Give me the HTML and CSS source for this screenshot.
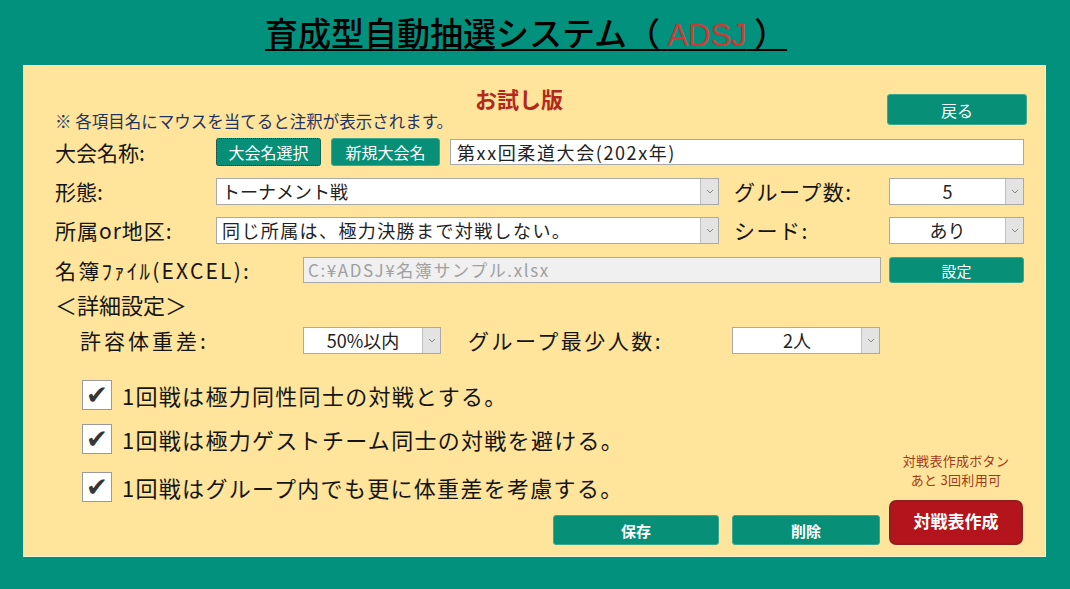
FILE: index.html
```html
<!DOCTYPE html>
<html lang="ja">

<head>
    <meta charset="UTF-8">
    <title>育成型自動抽選システム（ADSJ）</title>
    <link rel="stylesheet" href="styles.css">
</head>

<body>
    <h1 class="title">育成型自動抽選システム（ <span class="title-red">ADSJ</span> ）</h1>

    <div class="panel">
        <div class="head">
            <div class="head-left">
                <div class="trial">お試し版</div>
                <div class="note">※ 各項目名にマウスを当てると注釈が表示されます。</div>
            </div>
            <button class="btn btn-back">戻る</button>
        </div>

        <div class="row">
            <div class="label w161">大会名称:</div>
            <button class="btn btn-sm btn-focus">大会名選択</button>
            <button class="btn btn-sm btn-new">新規大会名</button>
            <div class="input input-name">第xx回柔道大会(202x年)</div>
        </div>

        <div class="row gap11">
            <div class="label w161">形態:</div>
            <div class="select w503"><span class="sel-text">トーナメント戦</span><span class="arrow"><svg width="8" height="5" viewBox="0 0 8 5"><polyline points="1,1 4,4 7,1" fill="none" stroke="#888" stroke-width="1"/></svg></span></div>
            <div class="label label2">グループ数:</div>
            <div class="select w135 center"><span class="sel-text">5</span><span class="arrow"><svg width="8" height="5" viewBox="0 0 8 5"><polyline points="1,1 4,4 7,1" fill="none" stroke="#888" stroke-width="1"/></svg></span></div>
        </div>

        <div class="row gap11">
            <div class="label w161 spaced">所属or地区:</div>
            <div class="select w503"><span class="sel-text wide">同じ所属は、極力決勝まで対戦しない。</span><span class="arrow"><svg width="8" height="5" viewBox="0 0 8 5"><polyline points="1,1 4,4 7,1" fill="none" stroke="#888" stroke-width="1"/></svg></span></div>
            <div class="label label2">シード:</div>
            <div class="select w135 center"><span class="sel-text">あり</span><span class="arrow"><svg width="8" height="5" viewBox="0 0 8 5"><polyline points="1,1 4,4 7,1" fill="none" stroke="#888" stroke-width="1"/></svg></span></div>
        </div>

        <div class="row gap12">
            <div class="label label-file w248">名簿ﾌｧｲﾙ(EXCEL):</div>
            <div class="input input-file">C:¥ADSJ¥名簿サンプル.xlsx</div>
            <button class="btn btn-set">設定</button>
        </div>

        <div class="section">＜詳細設定＞</div>

        <div class="row gap10">
            <div class="label label-indent w248">許容体重差:</div>
            <div class="select w138 center"><span class="sel-text">50%以内</span><span class="arrow"><svg width="8" height="5" viewBox="0 0 8 5"><polyline points="1,1 4,4 7,1" fill="none" stroke="#888" stroke-width="1"/></svg></span></div>
            <div class="label label3">グループ最少人数:</div>
            <div class="select w148 center"><span class="sel-text">2人</span><span class="arrow"><svg width="8" height="5" viewBox="0 0 8 5"><polyline points="1,1 4,4 7,1" fill="none" stroke="#888" stroke-width="1"/></svg></span></div>
        </div>

        <div class="lower">
            <div class="lower-left">
                <div class="check-row">
                    <span class="box">✔</span>
                    <span class="check-text">1回戦は極力同性同士の対戦とする。</span>
                </div>
                <div class="check-row second">
                    <span class="box">✔</span>
                    <span class="check-text">1回戦は極力ゲストチーム同士の対戦を避ける。</span>
                </div>
                <div class="check-row third">
                    <span class="box">✔</span>
                    <span class="check-text">1回戦はグループ内でも更に体重差を考慮する。</span>
                </div>
                <div class="actions">
                    <button class="btn btn-save">保存</button>
                    <button class="btn btn-delete">削除</button>
                </div>
            </div>
            <div class="lower-right">
                <div class="remain">対戦表作成ボタン<br>あと 3回利用可</div>
                <button class="btn-make">対戦表作成</button>
            </div>
        </div>
    </div>
</body>

</html>
```

FILE: styles.css
```css
body {
    margin: 0;
    background-color: #01917c;
    font-family: "Noto Sans CJK JP", "Noto Sans", sans-serif;
    color: #1a1a1a;
    height: 589px;
    overflow: hidden;
}

.title {
    margin: 0;
    height: 65px;
    padding-top: 12px;
    box-sizing: border-box;
    text-align: center;
    padding-right: 18px;
    font-size: 33px;
    line-height: 40px;
    font-weight: 500;
    color: #000;
    text-decoration: underline;
    text-decoration-thickness: 2px;
    text-underline-offset: 3px;
}
.title-red {
    color: #cf3a36;
    font-family: "Liberation Sans", Arial, sans-serif;
    font-size: 31px;
}

.panel {
    margin-left: 23px;
    width: 1023px;
    height: 492px;
    box-sizing: border-box;
    background-color: #ffe49b;
    border: 1px solid #f3f1d6;
    padding: 0 21px 0 31px;
}

.head {
    display: flex;
    justify-content: space-between;
    height: 72px;
    padding-top: 20px;
    box-sizing: border-box;
}
.trial {
    padding-left: 420px;
    font-size: 22px;
    line-height: 24px;
    font-weight: 700;
    color: #b3281c;
}
.note {
    font-size: 16.5px;
    line-height: 22px;
    color: #1f3560;
}
.btn-back {
    margin-top: 8px;
    margin-right: -3px;
    width: 140px;
    height: 31px;
    font-size: 16px;
}

.btn {
    background-color: #078f78;
    border: 1px solid #3aa88f;
    border-radius: 3px;
    color: #fff;
    font-family: "Noto Sans CJK JP", sans-serif;
    padding: 0;
    cursor: pointer;
}

.row {
    display: flex;
    align-items: center;
    height: 28px;
}
.gap10 { margin-top: 10px; }
.gap11 { margin-top: 11px; }
.gap12 { margin-top: 12px; }

.label {
    font-size: 21px;
    line-height: 28px;
    color: #151515;
    flex-shrink: 0;
}
.spaced { letter-spacing: 1px; }
.w161 { width: 161px; }
.w248 { width: 248px; box-sizing: border-box; }
.label2 {
    margin-left: 15px;
    width: 155px;
    letter-spacing: 1.5px;
}
.label3 {
    margin-left: 27px;
    width: 264px;
    letter-spacing: 2.5px;
}
.label-file {
    font-size: 21px;
    letter-spacing: 2.2px;
}
.label-indent {
    padding-left: 25px;
    font-size: 21px;
    letter-spacing: 3px;
}

.btn-sm {
    height: 28px;
    font-size: 16px;
    flex-shrink: 0;
}
.btn-focus {
    width: 105px;
    border: 1px dotted #1d3b36;
}
.btn-new {
    width: 109px;
    margin-left: 10px;
}

.input {
    height: 26px;
    box-sizing: border-box;
    border: 1px solid #a9a9a9;
    background-color: #fff;
    font-size: 18px;
    line-height: 24px;
    padding-left: 6px;
    color: #222;
    white-space: nowrap;
}
.input-name {
    margin-left: 10px;
    flex: 1;
    letter-spacing: 1.6px;
}
.input-file {
    width: 578px;
    background-color: #f0f0f0;
    color: #a0a0a0;
    font-size: 17px;
    padding-left: 4px;
    letter-spacing: 1.6px;
}
.btn-set {
    margin-left: 8px;
    width: 135px;
    height: 26px;
    font-size: 15px;
}

.select {
    display: flex;
    height: 27px;
    box-sizing: border-box;
    border: 1px solid #a9a9a9;
    background-color: #fff;
    flex-shrink: 0;
}
.sel-text {
    flex: 1;
    font-size: 18px;
    line-height: 25px;
    padding-left: 5px;
    color: #222;
    white-space: nowrap;
    overflow: hidden;
}
.sel-text.wide {
    letter-spacing: 1.4px;
}
.center .sel-text {
    text-align: center;
    padding-left: 0;
}
.arrow {
    width: 17px;
    display: flex;
    align-items: center;
    justify-content: center;
    background-color: #e3e3e3;
    border-left: 1px solid #c0c0c0;
}
.w503 { width: 503px; }
.w135 { width: 135px; }
.w138 { width: 138px; }
.w148 { width: 148px; }

.section {
    margin-top: 8px;
    font-size: 22px;
    line-height: 24px;
    color: #151515;
}

.lower {
    display: flex;
    align-items: flex-end;
    margin-top: 26px;
}
.lower-left {
    width: 825px;
}
.check-row {
    display: flex;
    align-items: center;
    height: 30px;
    padding-left: 27px;
}
.check-row.second { margin-top: 14px; }
.check-row.third { margin-top: 18px; }
.box {
    width: 30px;
    height: 30px;
    box-sizing: border-box;
    border: 1px solid #9a9a9a;
    background-color: #fff;
    color: #353535;
    font-family: "DejaVu Sans", sans-serif;
    font-size: 26px;
    line-height: 28px;
    text-align: center;
}
.check-text {
    margin-left: 10px;
    font-size: 22px;
    letter-spacing: 1.3px;
    color: #151515;
}
.actions {
    display: flex;
    justify-content: flex-end;
    gap: 13px;
    margin-top: 13px;
}
.btn-save {
    width: 166px;
    height: 30px;
    font-size: 15px;
    font-weight: 700;
}
.btn-delete {
    width: 148px;
    height: 30px;
    font-size: 15px;
    font-weight: 700;
}

.lower-right {
    margin-left: 9px;
    width: 134px;
    display: flex;
    flex-direction: column;
    align-items: center;
}
.remain {
    font-size: 13px;
    line-height: 19px;
    text-align: center;
    color: #a33a1a;
    letter-spacing: 0.3px;
}
.btn-make {
    margin-top: 11px;
    width: 134px;
    height: 45px;
    background-color: #b4151c;
    border: 2px solid #8f2020;
    border-radius: 7px;
    color: #fff;
    font-family: "Noto Sans CJK JP", sans-serif;
    font-size: 17px;
    font-weight: 700;
    padding: 0 0 4px;
    cursor: pointer;
}
```
